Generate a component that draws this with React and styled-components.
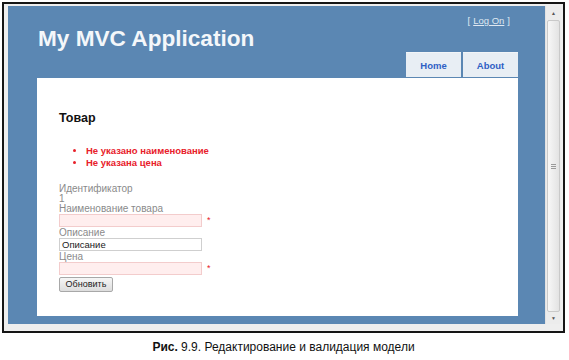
import React from "react";
import styled, { createGlobalStyle } from "styled-components";

const Global = createGlobalStyle`
  html, body { margin: 0; padding: 0; background: #ffffff; }
  body { font-family: "Liberation Sans", Arial, sans-serif; }
`;

const Figure = styled.div`
  width: 569px;
  height: 360px;
  padding: 2px 0 0 2px;
  box-sizing: border-box;
`;

const Window = styled.div`
  width: 563px;
  box-sizing: border-box;
  border: 2px solid #151515;
  background: #eeeeee;
  padding: 2px 2px 7px 4px;
  display: grid;
  grid-template-columns: 537px 16px;
  grid-template-rows: 318px;
`;

const Page = styled.div`
  background: #5b87b3;
  padding: 0 27px 8px 29px;
  display: flex;
  flex-direction: column;
`;

const Header = styled.div`
  height: 72px;
  display: flex;
  flex-direction: column;
`;

const LoginRow = styled.div`
  padding-top: 9px;
  height: 11px;
  display: flex;
  justify-content: flex-end;
  padding-right: 8px;
  font-size: 9.5px;
  line-height: 11px;
  color: #dfe8f1;
`;

const LoginLink = styled.span`
  text-decoration: underline;
  margin: 0 3px;
`;

const TitleRow = styled.div`
  flex: 1;
  display: flex;
  justify-content: space-between;
  align-items: flex-start;
`;

const Title = styled.h1`
  margin: 0 0 0 1px;
  font-size: 22.6px;
  line-height: 26px;
  font-weight: bold;
  color: #f4f7fa;
`;

const Menu = styled.ul`
  align-self: flex-end;
  list-style: none;
  margin: 0 0 1px 0;
  padding: 0;
  display: flex;
  gap: 2px;
`;

const Tab = styled.li`
  width: 55px;
  height: 25px;
  box-sizing: border-box;
  background: #e8eef4;
  border-top: 1px solid #f2f5f8;
  display: flex;
  align-items: center;
  justify-content: center;
  font-size: 9.5px;
  font-weight: bold;
  color: #2f5fc4;
`;

const Main = styled.div`
  flex: 1;
  background: #ffffff;
  padding: 33px 22px 0 22px;
`;

const Heading = styled.h2`
  margin: 0;
  font-size: 12.5px;
  line-height: 15px;
  font-weight: bold;
  color: #111111;
`;

const Errors = styled.ul`
  margin: 19px 0 0 0;
  padding: 0 0 0 27px;
  list-style: disc;
  color: #e8202a;
  font-size: 9.5px;
  line-height: 12px;
  font-weight: bold;
`;

const Form = styled.div`
  margin-top: 15px;
  display: flex;
  flex-direction: column;
  align-items: flex-start;
`;

const Label = styled.div`
  font-size: 10px;
  line-height: 10px;
  height: 10px;
  color: #8a8a8a;
`;

const InputRow = styled.div`
  display: flex;
  align-items: center;
  height: 13px;
  margin-bottom: ${(p) => p.$gap}px;
`;

const Input = styled.div`
  width: 143px;
  height: 13px;
  box-sizing: border-box;
  border: 1px solid ${(p) => (p.$invalid ? "#f3cccc" : "#cfcfcf")};
  background: ${(p) => (p.$invalid ? "#ffeeee" : "#ffffff")};
  font-size: 9.5px;
  line-height: 11px;
  padding-left: 2px;
  color: #222222;
`;

const Star = styled.span`
  margin-left: 5px;
  font-size: 9px;
  color: #e8202a;
  line-height: 13px;
`;

const Button = styled.div`
  width: 54px;
  height: 15px;
  box-sizing: border-box;
  border: 1px solid #a8a8a8;
  border-radius: 2px;
  background: linear-gradient(#f6f6f6, #dddddd);
  font-size: 9px;
  line-height: 13px;
  text-align: center;
  color: #222222;
`;

const ScrollBar = styled.div`
  background: #ececec;
  display: flex;
  flex-direction: column;
  border-left: 1px solid #e2e2e2;
`;

const Arrow = styled.div`
  height: ${(p) => p.$h}px;
  display: flex;
  align-items: center;
  justify-content: center;
  font-size: 5px;
  color: #555555;
`;

const Thumb = styled.div`
  flex: 1;
  margin: 0 1px;
  border: 1px solid #c9c9c9;
  border-radius: 2px;
  background: linear-gradient(to right, #f7f7f7, #e3e3e3);
  display: flex;
  align-items: center;
  justify-content: center;
`;

const Grip = styled.div`
  width: 5px;
  height: 5px;
  border-top: 1px solid #9a9a9a;
  border-bottom: 1px solid #9a9a9a;
  box-sizing: border-box;
  position: relative;
  &::after {
    content: "";
    position: absolute;
    left: 0;
    right: 0;
    top: 1px;
    border-top: 1px solid #9a9a9a;
  }
`;

const Caption = styled.div`
  margin-top: 8px;
  width: 563px;
  text-align: center;
  font-size: 12px;
  line-height: 13px;
  color: #111111;
`;

export default function App() {
  return (
    <>
      <Global />
      <Figure>
        <Window>
          <Page>
            <Header>
              <LoginRow>
                [<LoginLink>Log On</LoginLink>]
              </LoginRow>
              <TitleRow>
                <Title>My MVC Application</Title>
                <Menu>
                  <Tab>Home</Tab>
                  <Tab>About</Tab>
                </Menu>
              </TitleRow>
            </Header>
            <Main>
              <Heading>Товар</Heading>
              <Errors>
                <li>Не указано наименование</li>
                <li>Не указана цена</li>
              </Errors>
              <Form>
                <Label>Идентификатор</Label>
                <Label>1</Label>
                <Label>Наименование товара</Label>
                <InputRow $gap={1}>
                  <Input $invalid />
                  <Star>*</Star>
                </InputRow>
                <Label>Описание</Label>
                <InputRow $gap={1}>
                  <Input>Описание</Input>
                </InputRow>
                <Label>Цена</Label>
                <InputRow $gap={2}>
                  <Input $invalid />
                  <Star>*</Star>
                </InputRow>
                <Button>Обновить</Button>
              </Form>
            </Main>
          </Page>
          <ScrollBar>
            <Arrow $h={14}>▲</Arrow>
            <Thumb>
              <Grip />
            </Thumb>
            <Arrow $h={12}>▼</Arrow>
          </ScrollBar>
        </Window>
        <Caption>
          <b>Рис.</b> 9.9. Редактирование и валидация модели
        </Caption>
      </Figure>
    </>
  );
}
